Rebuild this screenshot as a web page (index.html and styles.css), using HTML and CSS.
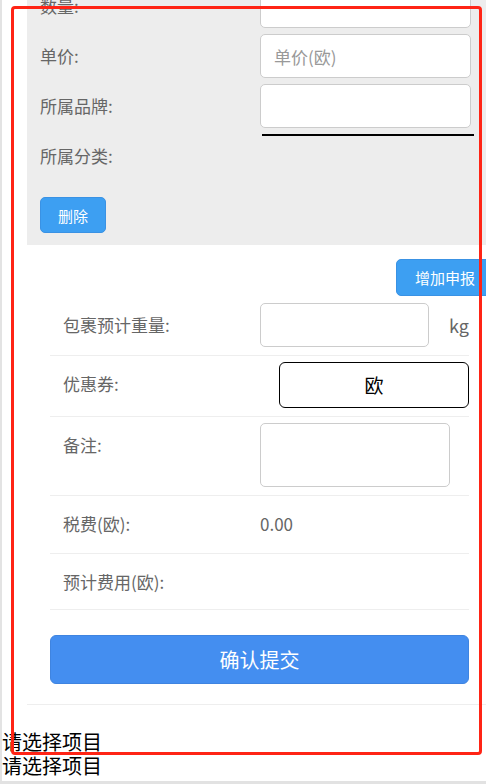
FILE: index.html
```html
<!DOCTYPE html>
<html lang="zh-CN">
<head>
    <meta charset="UTF-8">
    <meta name="viewport" content="width=device-width, initial-scale=1.0">
    <title>申报</title>
    <link rel="stylesheet" href="styles.css">
</head>
<body>

<div class="page">

    <div class="goods">
        <div class="goods-row">
            <span class="goods-label">数量:</span>
            <input class="goods-input" type="text">
        </div>
        <div class="goods-row">
            <span class="goods-label">单价:</span>
            <input class="goods-input" type="text" placeholder="单价(欧)">
        </div>
        <div class="goods-row">
            <span class="goods-label">所属品牌:</span>
            <input class="goods-input" type="text">
        </div>
        <div class="goods-row">
            <span class="goods-label">所属分类:</span>
            <div class="goods-select"></div>
        </div>
        <button class="btn-blue btn-delete">删除</button>
    </div>

    <div class="order">
        <div class="add-bar">
            <button class="btn-blue btn-add">增加申报</button>
        </div>

        <div class="form">
            <div class="form-row">
                <span class="form-label">包裹预计重量:</span>
                <input class="form-input weight" type="text">
                <span class="unit">kg</span>
            </div>
            <div class="form-row">
                <span class="form-label">优惠券:</span>
                <div class="coupon">欧</div>
            </div>
            <div class="form-row">
                <span class="form-label">备注:</span>
                <textarea class="form-input remark"></textarea>
            </div>
            <div class="form-row tax-row">
                <span class="form-label">税费(欧):</span>
                <span class="form-value">0.00</span>
            </div>
            <div class="form-row total-row">
                <span class="form-label">预计费用(欧):</span>
            </div>
            <button class="btn-submit">确认提交</button>
        </div>
    </div>

    <div class="picker">
        <div class="picker-text">请选择项目</div>
        <div class="picker-text">请选择项目</div>
    </div>

</div>

<div class="mark"></div>

</body>
</html>
```

FILE: styles.css
```css
html {
    background: #e2e2e2;
}

body {
    margin: 0;
    font-family: "Noto Sans CJK SC", "Microsoft YaHei", sans-serif;
    color: #666;
    font-size: 17px;
}

.page {
    background: white;
    border-left: 2px solid #e3e3e3;
    overflow: hidden;
    padding-bottom: 3px;
}

/* goods block */
.goods {
    margin: -16px 0 0 25px;
    background: #ededed;
    padding: 0 12px 12px 13px;
}

.goods-row {
    display: flex;
    align-items: center;
    height: 44px;
    margin-bottom: 6px;
}

.goods-label {
    width: 220px;
    flex-shrink: 0;
    line-height: 44px;
}

.goods-input {
    box-sizing: border-box;
    width: 211px;
    height: 44px;
    border: 1px solid #ccc;
    border-radius: 5px;
    background: white;
    padding: 0 13px;
    font-family: inherit;
    font-size: 17px;
    color: #333;
    outline: none;
}

.goods-input::placeholder {
    color: #999;
}

.goods-select {
    align-self: flex-start;
    width: 212px;
    margin-left: 2px;
    border-top: 2px solid #000;
}

.btn-blue {
    background: #3d9ff2;
    border: 1px solid #3a92e4;
    border-radius: 5px;
    color: white;
    font-family: inherit;
    font-size: 15px;
    cursor: pointer;
}

.btn-delete {
    display: block;
    margin-top: 19px;
    width: 66px;
    height: 36px;
    padding: 0;
}

/* order block */
.order {
    margin-left: 25px;
    border-bottom: 1px solid #eee;
}

.add-bar {
    display: flex;
    justify-content: flex-end;
    padding-top: 14px;
}

.btn-add {
    width: 98px;
    height: 37px;
    margin-right: -8px;
    padding: 0 0 0 18px;
    text-align: left;
}

.form {
    margin: 0 17px 0 23px;
    padding-bottom: 20px;
}

.form-row {
    display: flex;
    align-items: flex-start;
    min-height: 44px;
    padding: 6px 0 8px 13px;
    border-bottom: 1px solid #eee;
}

.form-row:first-child {
    padding-top: 7px;
}

.tax-row {
    padding-bottom: 7px;
}

.total-row {
    padding: 6px 0 5px 13px;
}

.form-label {
    width: 197px;
    flex-shrink: 0;
    line-height: 44px;
}

.form-value {
    line-height: 44px;
}

.form-input {
    box-sizing: border-box;
    border: 1px solid #ccc;
    border-radius: 5px;
    background: white;
    font-family: inherit;
    outline: none;
}

.weight {
    width: 169px;
    height: 44px;
}

.unit {
    margin-left: auto;
    line-height: 44px;
    font-size: 18px;
}

.coupon {
    box-sizing: border-box;
    margin-left: auto;
    width: 190px;
    height: 46px;
    border: 1px solid #000;
    border-radius: 6px;
    color: #000;
    font-size: 19px;
    text-align: center;
    line-height: 44px;
}

.remark {
    width: 190px;
    height: 64px;
    resize: none;
}

.btn-submit {
    display: block;
    width: 100%;
    height: 49px;
    margin-top: 25px;
    background: #448ef0;
    border: 1px solid #3f84e0;
    border-radius: 6px;
    color: white;
    font-family: inherit;
    font-size: 20px;
    cursor: pointer;
}

.picker {
    margin-top: 25px;
}

.picker-text {
    color: #000;
    font-size: 20px;
    line-height: 24px;
}

/* red annotation frame over the page */
.mark {
    position: absolute;
    left: 11px;
    top: 6px;
    width: 465px;
    height: 743px;
    border: 3px solid #ff2415;
    border-radius: 4px;
    pointer-events: none;
}
```
